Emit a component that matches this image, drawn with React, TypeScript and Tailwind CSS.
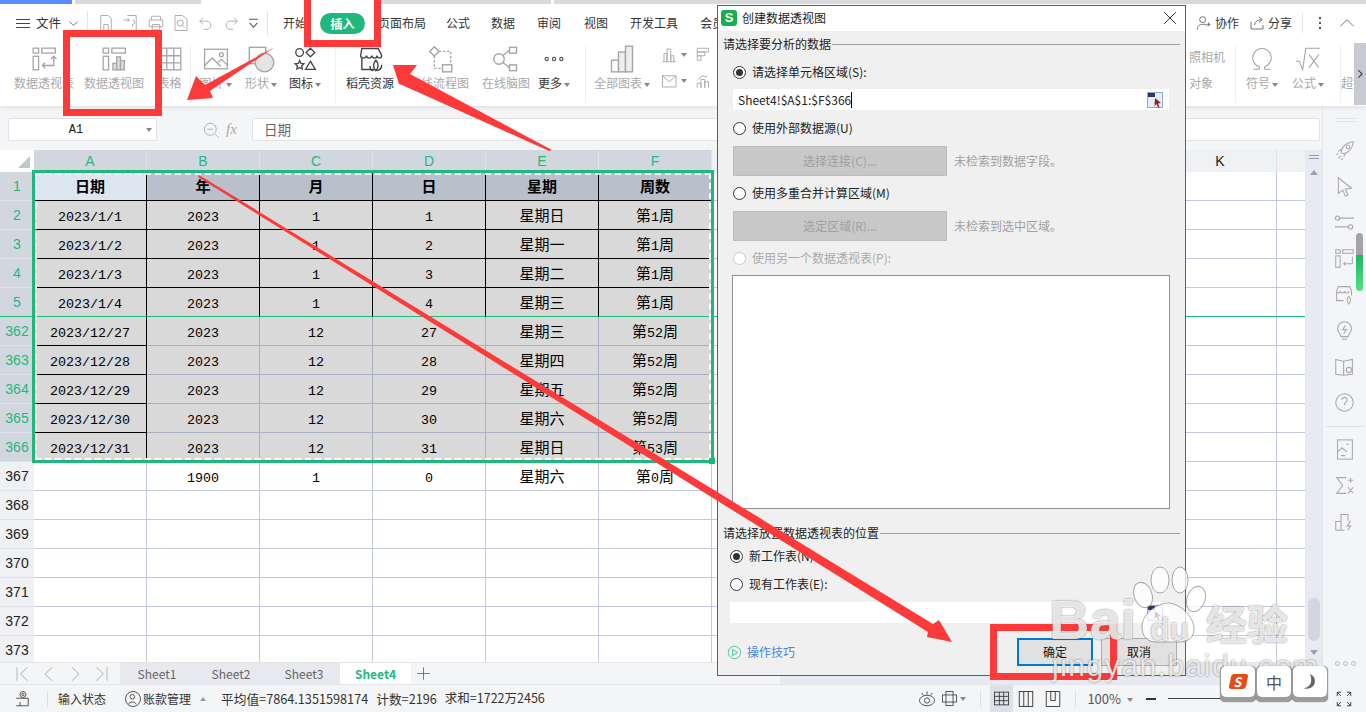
import React from "react";

const G = "#a6a6a6";

function Ic({ s = 24, w, h, c = G, sw = 1.2, children, vb = "0 0 24 24", className = "" }: any) {
  return (
    <svg width={w ?? s} height={h ?? s} viewBox={vb} fill="none" stroke={c} strokeWidth={sw} className={className}>
      {children}
    </svg>
  );
}

const PivotBase = (
  <>
    <rect x="2" y="2" width="5" height="4.5" />
    <rect x="2" y="9.5" width="5" height="12.5" />
    <rect x="10" y="2" width="12.5" height="4.5" />
  </>
);
const PivotT = () => (
  <Ic s={26}>
    {PivotBase}
    <path d="M21 10v8h-10M13 15.5 10.5 18l2.5 2.5M18.5 12 21 9.5l2.5 2.5" />
  </Ic>
);
const PivotC = () => (
  <Ic s={26}>
    {PivotBase}
    <rect x="11" y="16" width="3.5" height="6" fill="#ddd" />
    <rect x="14.5" y="10" width="3.5" height="12" fill="#ddd" />
    <rect x="18" y="13.5" width="3.5" height="8.5" fill="#ddd" />
  </Ic>
);
const TableI = () => (
  <Ic s={26}>
    <rect x="2" y="2" width="20" height="20" />
    <path d="M2 9h20M2 15.5h20M9 2v20M15.5 2v20" />
  </Ic>
);
const PicI = () => (
  <Ic s={26}>
    <rect x="1.5" y="3" width="21" height="18" />
    <path d="m1.5 18 7-7 8 8M14 15l3-2.5 5.500 5" />
    <circle cx="17" cy="8" r="1.800" />
  </Ic>
);
const ShapeI = () => (
  <Ic s={28}>
    <rect x="2" y="2" width="14" height="14" fill="#fff" />
    <circle cx="15" cy="15" r="8" fill="#e4e4e4" />
  </Ic>
);
const IconsI = () => (
  <Ic s={26} c="#444">
    <circle cx="7" cy="6" r="3.500" />
    <path d="m17 2 4 4-4 4-4-4zM7 13.500l1.200 2.600 2.800.3-2 2 .5 2.800-2.500-1.400-2.500 1.400.5-2.800-2-2 2.800-.3zM17 14l4.500 7.500h-9z" />
  </Ic>
);
const StoreI = () => (
  <Ic s={28} c="#444">
    <path d="M5 10v11h11M5 3h14l3 6c0 3-3.500 3-4 0 0 3-4 3-4.500 0-.5 3-4 3-4.500 0-.5 3-5 3-5 0z" />
    <path d="M17 22c-3-3-2-7 0-9 2 2 3 6 0 9zM17 22c3 0 5-2 5-5M15 22c-2 0-3-2-3-4" />
  </Ic>
);
const FlowI = () => (
  <Ic s={28}>
    <path d="m8 1.500 4 4-4 4-4-4z" />
    <path d="M12 5.500h10V17M8 9.500V20h7" strokeDasharray="2 1.500" />
    <rect x="15" y="17" width="8" height="6" />
  </Ic>
);
const MindI = () => (
  <Ic s={28}>
    <circle cx="6" cy="12" r="4.500" />
    <rect x="15" y="2" width="6" height="5" />
    <rect x="15" y="17" width="6" height="5" />
    <path d="M9.500 9 15 4.500M9.500 15l5.500 4.500" />
  </Ic>
);
const MoreI = () => (
  <Ic s={22} c="#555">
    <circle cx="4" cy="12" r="1.800" />
    <circle cx="12" cy="12" r="1.800" />
    <circle cx="20" cy="12" r="1.800" />
  </Ic>
);
const BarsI = () => (
  <Ic s={28}>
    <rect x="3" y="13" width="6" height="10" />
    <rect x="9" y="6" width="6" height="17" fill="#eee" />
    <rect x="15" y="1" width="6" height="22" fill="#eee" />
  </Ic>
);
const Caret = ({ c = "#888" }: any) => (
  <span className="inline-block w-0 h-0 ml-[2px] align-middle border-x-[3px] border-x-transparent border-t-[4px]" style={{ borderTopColor: c }} />
);

function RI({ w, icon, label, on, caret }: any) {
  return (
    <div className={`flex flex-col items-center shrink-0 pt-[3px] ${w}`}>
      <div className="h-[28px] flex items-center justify-center">{icon}</div>
      <div className={`mt-[1px] text-[12px] leading-[18px] whitespace-nowrap ${on ? "text-[#333]" : "text-[#a9a9a9]"}`}>
        {label}
        {caret && <Caret />}
      </div>
    </div>
  );
}
const VSep = ({ mx = "" }: any) => <div className={`w-px h-[58px] bg-[#eeeff2] shrink-0 self-center ${mx}`} />;

function MenuRow() {
  const qi = "shrink-0";
  return (
    <div className="h-[38px] flex items-center bg-white text-[12px] text-[#333] shrink-0">
      <div className="flex flex-col gap-[3px] ml-[16px] w-[14px]">
        <div className="h-px bg-[#444]" />
        <div className="h-px bg-[#444]" />
        <div className="h-px bg-[#444]" />
      </div>
      <span className="ml-[6px] text-[12.500px]">文件</span>
      <Ic s={11} c="#777" className="ml-[7px]"><path d="m3 8 9 8 9-8" strokeWidth="2" /></Ic>
      <div className="w-px h-[24px] bg-[#e3e4e8] ml-[8px] mr-[9px]" />
      <div className="flex items-center gap-[7px] w-[168px]">
        <Ic s={18} className={qi}><path d="M5 2h10l4 4v16H5zM9 22v-8h6v8" /></Ic>
        <Ic s={18} className={qi}><path d="M7 2h12v20H7M2 8h8M7 5l3 3-3 3M14 8a3 3 0 0 1 0 6v3" /></Ic>
        <Ic s={18} className={qi}><path d="M6 8V3h12v5M3 8h18v9H3zM7 14h10v7H7z" /></Ic>
        <Ic s={18} className={qi}><path d="M4 2h10l6 5v15H4z" /><circle cx="11" cy="12" r="4" /><path d="m14 15 3 3" /></Ic>
        <Ic s={18} className={qi}><path d="M8 5 3.500 9.500 8 14M4 9.500h9a5.500 5.500 0 0 1 0 11H9" /></Ic>
        <Ic s={18} className={qi}><path d="M16 5l4.500 4.500L16 14M20 9.500h-9a5.500 5.500 0 0 0 0 11h4" /></Ic>
        <Ic s={13} c="#555" className={qi}><path d="M4 4h16M5 11l7 8 7-8" strokeWidth="2" /></Ic>
      </div>
      <div className="w-px h-[24px] bg-[#e3e4e8] ml-[2px]" />
      <div className="flex items-center ml-[15px] whitespace-nowrap">
        <span>开始</span>
        <span className="ml-[13px] w-[45px] h-[21px] rounded-full bg-[#1fb97d] text-white font-bold text-center leading-[21px]">插入</span>
        <span className="ml-[13px]">页面布局</span>
        <span className="ml-[20px]">公式</span>
        <span className="ml-[21px]">数据</span>
        <span className="ml-[22px]">审阅</span>
        <span className="ml-[23px]">视图</span>
        <span className="ml-[22px]">开发工具</span>
        <span className="ml-[22px]">会员专享</span>
      </div>
      <div className="ml-auto flex items-center">
        <Ic s={16} c="#555"><circle cx="10" cy="7" r="4.500" /><path d="M2 22c0-6 4-8 8-8s6 1 7 2M19 11v6M16 14h6" /></Ic>
        <span className="ml-[3px]">协作</span>
        <Ic s={16} c="#555" className="ml-[10px]"><path d="M3 10v11h18v-6M8 15c1-5 5-8 11-8M15 3l5 4-5 4" /></Ic>
        <span className="ml-[3px]">分享</span>
        <div className="w-px h-[20px] bg-[#e3e4e8] ml-[10px]" />
        <div className="flex flex-col gap-[3px] ml-[16px]">
          <div className="w-[2px] h-[2px] bg-[#555]" />
          <div className="w-[2px] h-[2px] bg-[#555]" />
          <div className="w-[2px] h-[2px] bg-[#555]" />
        </div>
        <Ic s={16} c="#555" className="ml-[18px] mr-[11px]"><path d="m2 17 10-10 10 10" /></Ic>
      </div>
    </div>
  );
}

function Ribbon() {
  return (
    <div className="h-[64px] flex bg-white shadow-[0_2px_4px_rgba(0,0,0,0.08)] relative z-10 shrink-0">
      <div className="w-[9px] shrink-0" />
      <RI w="w-[70px]" icon={<PivotT />} label="数据透视表" />
      <RI w="w-[70px]" icon={<PivotC />} label="数据透视图" />
      <RI w="w-[41px]" icon={<TableI />} label="表格" />
      <VSep />
      <RI w="w-[49px]" icon={<PicI />} label="图片" caret />
      <RI w="w-[42px]" icon={<ShapeI />} label="形状" caret />
      <RI w="w-[46px]" icon={<IconsI />} label="图标" caret on />
      <div className="w-[7px]" />
      <VSep />
      <RI w="w-[68px]" icon={<StoreI />} label="稻壳资源" on />
      <RI w="w-[70px]" icon={<FlowI />} label="在线流程图" />
      <RI w="w-[64px]" icon={<MindI />} label="在线脑图" />
      <RI w="w-[32px]" icon={<MoreI />} label="更多" caret on />
      <div className="w-[15px]" />
      <VSep />
      <RI w="w-[72px]" icon={<BarsI />} label="全部图表" caret />
      <div className="flex flex-col gap-[8px] pt-[4px] ml-[3px] w-[34px] shrink-0">
        <div className="flex items-center">
          <Ic s={18}><path d="M4 21V10h4v11M8 21V4h5v17M13 21v-8h4v8M2 21h18" /></Ic>
          <Caret />
        </div>
        <div className="flex items-center">
          <Ic s={18}><path d="M2 5h18v15H2zM2 5l9 8 9-8" /></Ic>
          <Caret />
        </div>
      </div>
      <div className="flex flex-col gap-[8px] pt-[4px] w-[21px] shrink-0">
        <Ic s={18}><path d="M3 3h15v5H3zM3 8h10v5H3zM3 13h5v6H3z" /></Ic>
        <Ic s={18}><path d="M3 21v-6h5v6M8 21V10h5v11M13 21v-8h5v8M4 10l6-5 6 2" /></Ic>
      </div>
      <div className="flex-1" />
      <div className="flex flex-col w-[46px] shrink-0 text-[12px] text-[#a9a9a9] pt-[6px]">
        <span className="leading-[18px]">照相机</span>
        <span className="leading-[18px] mt-[8px]">对象</span>
      </div>
      <VSep />
      <RI w="w-[52px]" icon={<Ic s={26} sw={1}><path d="M4 21.500h5.500v-2.500a8.500 8.500 0 1 1 5 0v2.500H20" /></Ic>} label="符号" caret />
      <RI w="w-[40px]" icon={<Ic s={26} sw={1}><path d="M1 14h3l3 8 3-20h13M13 8l9 12M22 8l-9 12" /></Ic>} label="公式" caret />
      <div className="w-[12px]" />
      <VSep />
      <div className="w-[13px] pt-[32px] text-[12px] leading-[18px] text-[#a9a9a9] overflow-hidden whitespace-nowrap">超链接</div>
      <div className="w-[12px] bg-[#c9cacf] flex items-center justify-center text-[#333] my-[1px]">
        <Ic s={10} c="#222" sw={2.500}><path d="m8 3 9 9-9 9" /></Ic>
      </div>
    </div>
  );
}

function FormulaRow() {
  return (
    <div className="h-[44px] bg-[#f4f5f7] flex items-center pt-[3px] pl-[8px] pr-[2px] shrink-0">
      <div className="w-[149px] h-[23px] bg-white border border-[#e2e3e7] rounded-[2px] flex items-center relative justify-center pr-[13px] font-['Liberation_Mono',monospace] text-[12px] text-[#222]">
        A1
        <span className="absolute right-[4px] top-[9px] w-0 h-0 border-x-[3px] border-x-transparent border-t-[4px] border-t-[#888]" />
      </div>
      <Ic s={18} className="ml-[45px]" c="#aaa"><circle cx="11" cy="11" r="8" /><path d="M7 11h8M17 17l5 5" /></Ic>
      <span className="ml-[6px] w-[20px] italic text-[15px] text-[#aaa] font-['Liberation_Serif',serif]">fx</span>
      <div className="ml-[6px] flex-1 h-[23px] bg-white border border-[#e2e3e7] rounded-[2px] px-[11px] text-[13.500px] leading-[20px] text-[#666]">日期</div>
    </div>
  );
}

const Mono = "font-['Liberation_Mono',monospace] text-[13.330px]";
function Mix({ t }: { t: string }) {
  return (
    <>
      {t.split(/([\d/]+)/).map((p, i) =>
        /[\d/]/.test(p) ? <span key={i} className={Mono}>{p}</span> : <span key={i}>{p}</span>
      )}
    </>
  );
}

const COLS = ["A", "B", "C", "D", "E", "F", "G", "H", "I", "J", "K", "L"];

function Row({ num, cells, kind }: { num: string; cells?: string[]; kind: string }) {
  const selected = kind !== "plain";
  return (
    <div className="flex h-[29px] shrink-0">
      <div
        className={`w-[34px] shrink-0 text-center text-[14px] leading-[28px] font-['Liberation_Sans',sans-serif] ${
          selected ? "bg-[#d2d6df] text-[#1fb97d]" : "bg-[#eff1f5] text-[#222]"
        } ${kind === "r5" ? "border-b border-b-[#1fb97d]" : "border-b border-b-[#dfe2e9]"}`}
      >
        {num}
      </div>
      {COLS.map((c, i) => {
        const inSel = selected && i < 6;
        let cls = "border-r border-b border-[#c3c9d8]";
        if (kind === "head" || kind === "top") cls = "border-r border-b border-black";
        if (kind === "r5") cls = "border-r border-black border-b-[#1fb97d] border-b";
        if (kind === "low") cls = i === 0 ? "border-r border-b border-black" : "border-r border-b border-[#a9afc0]";
        if (selected && i >= 6) cls = kind === "r5" ? "border-r border-[#c3c9d8] border-b border-b-[#1fb97d]" : "border-r border-b border-[#c3c9d8]";
        let bg = "bg-white";
        if (inSel) bg = "bg-[#d9d9d9]";
        if (kind === "head" && i < 6) bg = i === 0 ? "bg-[#dce6f1]" : "bg-[#b8c0cb]";
        return (
          <div
            key={c}
            className={`w-[113px] shrink-0 text-center leading-[28px] text-[15px] text-black ${cls} ${bg} ${
              kind === "head" && i < 6 ? "font-bold text-[#333]" : ""
            }`}
          >
            {cells && cells[i] ? <Mix t={cells[i]} /> : null}
          </div>
        );
      })}
    </div>
  );
}

function Sheet() {
  const rows: [string, string[] | undefined, string][] = [
    ["1", ["日期", "年", "月", "日", "星期", "周数"], "head"],
    ["2", ["2023/1/1", "2023", "1", "1", "星期日", "第1周"], "top"],
    ["3", ["2023/1/2", "2023", "1", "2", "星期一", "第1周"], "top"],
    ["4", ["2023/1/3", "2023", "1", "3", "星期二", "第1周"], "top"],
    ["5", ["2023/1/4", "2023", "1", "4", "星期三", "第1周"], "r5"],
    ["362", ["2023/12/27", "2023", "12", "27", "星期三", "第52周"], "low"],
    ["363", ["2023/12/28", "2023", "12", "28", "星期四", "第52周"], "low"],
    ["364", ["2023/12/29", "2023", "12", "29", "星期五", "第52周"], "low"],
    ["365", ["2023/12/30", "2023", "12", "30", "星期六", "第52周"], "low"],
    ["366", ["2023/12/31", "2023", "12", "31", "星期日", "第53周"], "low"],
    ["367", ["", "1900", "1", "0", "星期六", "第0周"], "plain"],
    ["368", undefined, "plain"],
    ["369", undefined, "plain"],
    ["370", undefined, "plain"],
    ["371", undefined, "plain"],
    ["372", undefined, "plain"],
    ["373", undefined, "plain"],
  ];
  return (
    <div className="h-[512px] w-[1305px] overflow-hidden relative shrink-0 bg-white">
      <div className="flex h-[22px]">
        <div className="w-[34px] shrink-0 bg-white relative">
          <div className="absolute right-[4px] bottom-[4px] w-0 h-0 border-l-[12px] border-l-transparent border-b-[12px] border-b-[#c4c6cc]" />
        </div>
        {COLS.map((c, i) => (
          <div
            key={c}
            className={`w-[113px] shrink-0 text-center text-[14px] leading-[22px] font-['Liberation_Sans',sans-serif] border-r border-[#dfe2e9] ${
              i < 6 ? "bg-[#d2d6df] text-[#1fb97d]" : "bg-[#eff1f5] text-[#222]"
            }`}
          >
            {c}
          </div>
        ))}
      </div>
      {rows.map((r) => (
        <Row key={r[0]} num={r[0]} cells={r[1]} kind={r[2]} />
      ))}
      <div className="absolute left-[32px] top-[20px] w-[682px] h-[293px] border-[3px] border-[#1fb97d] pointer-events-none">
        <div className="w-full h-full border-2 border-dashed border-white" />
        <div className="absolute right-[-4px] bottom-[-4px] w-[6px] h-[6px] bg-[#1fb97d]" />
      </div>
    </div>
  );
}

function VScroll() {
  return (
    <div className="w-[17px] h-[512px] bg-[#e8eaf1] flex flex-col items-center relative shrink-0">
      <div className="mt-[5px] w-[10px] h-[4px] border-y border-[#9a9ea8]" />
      <div className="mt-[11px] w-0 h-0 border-x-[4px] border-x-transparent border-b-[5px] border-b-[#9aa0ad]" />
      <div className="mt-[423px] w-[12px] h-[43px] rounded-[6px] bg-[#d3d6e0]" />
      <div className="mt-[9px] w-0 h-0 border-x-[4px] border-x-transparent border-t-[5px] border-t-[#9aa0ad]" />
    </div>
  );
}

function TabsRow() {
  return (
    <div className="h-[23px] bg-[#f4f5f7] flex items-center border-y border-[#e3e5ea] shrink-0 text-[12px] text-[#666]">
      <div className="w-[120px] flex items-center shrink-0 pl-[14px] gap-[8px]">
        <Ic s={18} c="#bbb" sw={1.400}><path d="M4 3v18M18 3l-9 9 9 9" /></Ic>
        <Ic s={18} c="#bbb" sw={1.400}><path d="m16 3-9 9 9 9" /></Ic>
        <Ic s={18} c="#bbb" sw={1.400}><path d="m8 3 9 9-9 9" /></Ic>
        <Ic s={18} c="#bbb" sw={1.400}><path d="M20 3v18M6 3l9 9-9 9" /></Ic>
      </div>
      <div className="w-[220px] h-full bg-[#e7e9ef] flex items-center shrink-0">
        <span className="w-[74px] text-center">Sheet1</span>
        <span className="w-[74px] text-center">Sheet2</span>
        <span className="w-[72px] text-center">Sheet3</span>
      </div>
      <div className="w-[71px] h-full bg-white text-[#1fb97d] font-bold text-center leading-[21px] shrink-0">Sheet4</div>
      <Ic s={15} c="#555" className="ml-[5px]"><path d="M12 2v20M2 12h20" /></Ic>
      <div className="ml-auto w-[542px] h-full bg-[#e8eaf1]" />
    </div>
  );
}

function Sidebar() {
  const on = (d: React.ReactNode) => <Ic s={21} c="#a8a8a8">{d}</Ic>;
  const list = [
    <><path d="M9 15c-2-4 3-12 13-13-1 10-9 15-13 13zM5 13l5-3M11 19l3-5M5 21l3-3M3 17l2-2M8 23l2-2" /><circle cx="16" cy="8" r="2" /></>,
    <path d="M5 2l15 12-7 1 3 7-3 1-3-7-5 4z" />,
    <><circle cx="4" cy="7" r="2.500" /><path d="M7 7h16M1 17h16" /><circle cx="19" cy="17" r="2.500" /></>,
    <><rect x="2" y="2" width="5" height="4" /><rect x="2" y="9" width="5" height="13" /><rect x="10" y="2" width="12" height="4" /><path d="M21 10v8H11M13 16l-2 2 2 2" /></>,
    <path d="M3 8l2-5h13l2 5v5M3 8v11h8M3 8c0 3 4 3 4 0 0 3 5 3 5 0 0 3 5 3 5 0M17 23c-3-3-2-7 0-9 2 2 3 6 0 9z" />,
    <><path d="M8 19c0-3-4-4-4-9a8 8 0 0 1 16 0c0 5-4 6-4 9zM9 22h6" /><path d="m13 6-3 5h4l-3 5" /></>,
    <><path d="M2 4l9 2 10-2v17l-10 1-9-1zM11 6v16" /><circle cx="17" cy="16" r="3" /></>,
    <><circle cx="12" cy="12" r="10" /><path d="M9 9a3 3 0 1 1 4 3c-1 .5-1 1-1 3M12 18v.5" /></>,
  ];
  const list2 = [
    <><rect x="4" y="1" width="17" height="22" /><path d="M4 15l5-5 6 5M14 6h3M8 19h5" /></>,
    <path d="M14 3H3l7 9-7 9h11M19 3v6M16 6h6M16 14l6 7M22 14l-6 7" />,
    <path d="M2 22V12h6V4h8v7M2 22h10M8 12v10M19 11l-4 6h4l-3 5" />,
  ];
  return (
    <div className="w-[44px] bg-[#f4f5f8] border-l border-[#e5e7ec] flex flex-col items-center shrink-0 relative">
      <div className="mt-[12px] w-[20px] h-[4px] border-y border-[#dfe1e6]" />
      <div className="mt-[18px] flex flex-col gap-[15px] items-center">
        {list.map((d, i) => (
          <div key={i} className="h-[21px]">{on(d)}</div>
        ))}
      </div>
      <div className="mt-[13px] w-[38px] h-px bg-[#dfe1e6]" />
      <div className="mt-[12px] flex flex-col gap-[15px] items-center">
        {list2.map((d, i) => (
          <div key={i} className="h-[21px]">{on(d)}</div>
        ))}
      </div>
      <div className="absolute left-[33px] top-[127px] w-[7px] h-[58px] rounded-[4px] overflow-hidden flex flex-col">
        <div className="h-[22px] bg-[#a5a5a5]" />
        <div className="flex-1 bg-gradient-to-b from-[#18b569] to-[#52e080]" />
      </div>
      <div className="absolute left-[12px] top-[555px] flex gap-[3px]">
        <div className="w-[5px] h-[5px] rounded-full border border-[#bbb]" />
        <div className="w-[5px] h-[5px] rounded-full border border-[#bbb]" />
        <div className="w-[5px] h-[5px] rounded-full border border-[#bbb]" />
      </div>
    </div>
  );
}

function StatusBar() {
  return (
    <div className="h-[27px] bg-[#f4f5f7] flex items-center text-[12px] text-[#333] whitespace-nowrap shrink-0">
      <Ic s={18} c="#444" className="ml-[14px]"><circle cx="12" cy="6" r="4" /><circle cx="12" cy="6" r="1.500" /><path d="M3 11h16v10H8M8 16v5M3 21h5" /></Ic>
      <div className="w-px h-[16px] bg-[#dcdde1] ml-[15px]" />
      <span className="ml-[10px]">输入状态</span>
      <Ic s={18} c="#444" className="ml-[18px]"><circle cx="12" cy="12" r="10" /><circle cx="11" cy="9" r="3" /><path d="M6 19c1-4 9-4 10 0" /></Ic>
      <span className="ml-[1px]">账款管理</span>
      <span className="ml-[9px] w-0 h-0 border-x-[3.500px] border-x-transparent border-b-[4px] border-b-[#999]" />
      <span className="ml-[15px] text-[12.700px]">平均值=7864.1351598174</span>
      <span className="ml-[8px] text-[12.700px]">计数=2196</span>
      <span className="ml-[8px] text-[12.500px]">求和=1722万2456</span>
      <div className="ml-auto flex items-center">
        <Ic s={18} c="#444"><ellipse cx="12" cy="14" rx="10" ry="7" /><circle cx="12" cy="14" r="3.500" /><path d="M12 2v4M5 4l2 3M19 4l-2 3" /></Ic>
        <Ic s={17} c="#444" className="ml-[5px]"><rect x="2" y="7" width="20" height="10" /><rect x="7" y="2" width="10" height="20" /></Ic>
        <Caret />
        <div className="w-px h-[16px] bg-[#dcdde1] ml-[14px]" />
        <div className="ml-[9px] w-[23px] h-[27px] bg-[#dde0e7] flex items-center justify-center">
          <Ic s={17} c="#333"><rect x="2" y="3" width="20" height="18" /><path d="M2 9h20M2 15h20M9 3v18M15 3v18" /></Ic>
        </div>
        <Ic s={18} c="#333" className="ml-[4px]"><rect x="3" y="2" width="18" height="20" /><path d="M9 2v20M15 2v20" /></Ic>
        <Ic s={18} c="#333" className="ml-[9px]"><path d="M3 2h18v20H3zM9 2v12h6V2" /></Ic>
        <div className="w-px h-[16px] bg-[#dcdde1] ml-[13px]" />
        <span className="ml-[11px] text-[13px] text-[#555]">100%</span>
        <span className="ml-[4px]"><Caret /></span>
        <div className="ml-[13px] w-[10px] h-[2px] bg-[#333]" />
        <div className="ml-[12px] w-[125px] h-px bg-[#444]" />
        <Ic s={18} c="#333" className="ml-[42px] mr-[13px]"><path d="M3 8V3h5M16 3h5v5M21 16v5h-5M8 21H3v-5M3 3l5 5M21 3l-5 5M21 21l-5-5M3 21l5-5" /></Ic>
      </div>
    </div>
  );
}

function Radio({ on, off }: any) {
  return (
    <span className={`w-[13px] h-[13px] rounded-full border shrink-0 flex items-center justify-center bg-white ${off ? "border-[#ccc]" : "border-[#333]"}`}>
      {on && <span className="w-[7px] h-[7px] rounded-full bg-[#333]" />}
    </span>
  );
}
const Picker = () => (
  <Ic s={16} vb="0 0 16 16" c="#8aa8d8" sw={1}>
    <rect x="0.500" y="0.500" width="15" height="15" fill="#e6eefb" />
    <rect x="1" y="1" width="7" height="4" fill="#33336b" stroke="none" />
    <path d="m8 6 6 5-3 .5 1.500 3.500-1.500.5-1.500-3.500-2 2z" fill="#8a2a1a" stroke="none" />
  </Ic>
);
function Legend({ t }: any) {
  return (
    <div className="flex items-center h-[18px] text-[12px] text-[#222] whitespace-nowrap">
      {t}
      <div className="flex-1 h-px bg-[#a0a0a0] ml-[1px]" />
    </div>
  );
}
function RadioLine({ on, off, label, cls }: any) {
  return (
    <div className={`flex items-center gap-[6px] h-[18px] text-[12px] whitespace-nowrap ${off ? "text-[#aaa]" : "text-[#222]"} ${cls}`}>
      <Radio on={on} off={off} />
      {label}
    </div>
  );
}
function DisabledBtn({ t, hint, cls }: any) {
  return (
    <div className={`flex items-center ml-[10px] ${cls}`}>
      <div className="w-[214px] h-[30px] bg-[#c8c8c8] border border-[#bdbdbd] text-center leading-[28px] text-[12px] text-[#a0a0a0]">{t}</div>
      <span className="ml-[7px] text-[12px] text-[#a0a0a0]">{hint}</span>
    </div>
  );
}

function Dialog() {
  return (
    <div className="absolute left-[717px] top-[5px] w-[469px] h-[671px] bg-[#f0f0f0] border border-[#5f5f5f] z-20 flex flex-col">
      <div className="h-[25px] pb-[2px] bg-white flex items-center shrink-0">
        <span className="ml-[3px] w-[16px] h-[16px] rounded-[3px] bg-[#15b04d] text-white text-[13px] font-bold leading-[16px] text-center font-['Liberation_Sans',sans-serif]">S</span>
        <span className="ml-[5px] text-[12px] text-[#222]">创建数据透视图</span>
        <Ic s={14} c="#222" className="ml-auto mr-[8px]"><path d="m2 2 20 20M22 2 2 22" strokeWidth="1.600" /></Ic>
      </div>
      <div className="pl-[5px] pr-[5px] flex flex-col flex-1 relative">
        <div className="mt-[4px]"><Legend t="请选择要分析的数据" /></div>
        <RadioLine on label="请选择单元格区域(S):" cls="ml-[10px] mt-[10px]" />
        <div className="ml-[10px] mt-[8px] w-[436px] h-[21px] bg-white flex items-center pl-[5px] pr-[6px] text-[12px] text-[#222]">
          Sheet4!$A$1:$F$366
          <span className="w-px h-[16px] bg-black" />
          <span className="ml-auto"><Picker /></span>
        </div>
        <RadioLine label="使用外部数据源(U)" cls="ml-[10px] mt-[9px]" />
        <DisabledBtn t="选择连接(C)..." hint="未检索到数据字段。" cls="mt-[9px]" />
        <RadioLine label="使用多重合并计算区域(M)" cls="ml-[10px] mt-[8px]" />
        <DisabledBtn t="选定区域(R)..." hint="未检索到选中区域。" cls="mt-[9px]" />
        <RadioLine off label="使用另一个数据透视表(P):" cls="ml-[10px] mt-[8px]" />
        <div className="ml-[9px] mt-[8px] w-[438px] h-[234px] bg-white border border-[#8f8f8f] shrink-0" />
        <div className="mt-[15px]"><Legend t="请选择放置数据透视表的位置" /></div>
        <RadioLine on label="新工作表(N)" cls="ml-[7px] mt-[5px]" />
        <RadioLine label="现有工作表(E):" cls="ml-[7px] mt-[10px]" />
        <div className="ml-[7px] mt-[9px] w-[439px] h-[21px] bg-white flex items-center justify-end pr-[6px] shrink-0"><Picker /></div>
        <div className="flex items-center mt-[15px]">
          <span className="ml-[4px]"><Ic s={15} c="#1fb97d"><circle cx="12" cy="12" r="10" /><path d="m9 7 8 5-8 5z" /></Ic></span>
          <span className="ml-[5px] text-[12px] text-[#4a86e8]">操作技巧</span>
          <div className="ml-[222px] w-[76px] h-[28px] border-2 border-[#0078d7] bg-[#e1e1e1] text-center leading-[24px] text-[12px] text-[#111]">确定</div>
          <div className="ml-[8px] w-[76px] h-[28px] border border-[#adadad] bg-[#e1e1e1] text-center leading-[26px] text-[12px] text-[#111]">取消</div>
        </div>
      </div>
    </div>
  );
}

function Annotations() {
  const red = "#fd3a3a";
  return (
    <>
      <div className="absolute left-[63px] top-[30px] w-[99px] h-[86px] border-[7px] border-[#fd3a3a] z-30" />
      <div className="absolute left-[304px] top-[-8px] w-[77px] h-[55px] border-[7px] border-[#fd3a3a] z-30" />
      <div className="absolute left-[990px] top-[624px] w-[127px] h-[56px] border-[7px] border-[#fd3a3a] z-30" />
      <svg className="absolute left-0 top-0 z-30 pointer-events-none" width={1366} height={712} fill={red}>
        <polygon points="187,100 196,76 205,85 275,47 210,91 213,98" />
        <polygon points="393,65 417,65 410,74 552,150 549,151 402,85 399,84" />
        <polygon points="199,175 933,624 939,620 952,642 927,637 928,632 198,177" />
      </svg>
    </>
  );
}

function Watermark() {
  const sh = "[text-shadow:0_0_2px_rgba(60,60,60,0.7)]";
  return (
    <div className="absolute left-0 top-0 w-[1366px] h-[712px] z-40 pointer-events-none">
      <span className={`absolute left-[1049px] top-[590px] text-[56px] leading-[60px] font-bold text-white/80 font-['Liberation_Sans',sans-serif] ${sh}`}>Bai</span>
      <svg className="absolute left-[1130px] top-[565px]" width={76} height={80} fill="rgba(255,255,255,0.75)" stroke="rgba(90,90,90,0.5)">
        <ellipse cx="13" cy="30" rx="9" ry="13" transform="rotate(-20 13 30)" />
        <ellipse cx="30" cy="15" rx="9" ry="13" />
        <ellipse cx="50" cy="15" rx="8" ry="13" />
        <ellipse cx="66" cy="34" rx="9" ry="13" transform="rotate(20 66 34)" />
        <path d="M12 62c0-14 16-24 26-24s26 12 26 26c0 10-8 13-14 13H26C18 77 12 72 12 62z" />
      </svg>
      <span className={`absolute left-[1150px] top-[612px] text-[32px] leading-[34px] font-bold text-white/80 font-['Liberation_Sans',sans-serif] ${sh}`}>du</span>
      <span className={`absolute left-[1206px] top-[598px] text-[41px] leading-[48px] font-bold text-white/80 ${sh}`}>经验</span>
      <span className={`absolute left-[1052px] top-[650px] text-[30px] leading-[32px] tracking-[1.500px] text-white/80 font-['Liberation_Sans',sans-serif] ${sh}`}>jingyan.baidu.com</span>
    </div>
  );
}

function Key({ children }: any) {
  return (
    <div className="w-[36px] h-[36px] rounded-[5px] bg-[#9c9c9c] pb-[5px] px-[1px] shadow-[0_0_1px_#555]">
      <div className="w-full h-full rounded-[5px] bg-white flex items-center justify-center">{children}</div>
    </div>
  );
}
function Ime() {
  return (
    <div className="absolute left-[1220px] top-[666px] z-50 flex">
      <Key>
        <span className="w-[17px] h-[15px] -skew-x-12 rounded-[3px] bg-[#e94a1a] text-white text-[13px] font-bold leading-[15px] text-center">S</span>
      </Key>
      <Key><span className="text-[16px] text-[#555]">中</span></Key>
      <Key>
        <svg width={16} height={18} viewBox="0 0 16 18" fill="#666"><path d="M8 1c5 2 6 7 4 11-2 3-7 5-11 3 4 0 7-2 8-6 .5-3 0-6-1-8z" /></svg>
      </Key>
    </div>
  );
}

export default function App() {
  return (
    <div className="w-[1366px] h-[712px] relative overflow-hidden bg-white font-['Noto_Sans_CJK_SC',sans-serif] flex flex-col">
      <div className="h-[4px] flex bg-white shrink-0">
        <div className="w-[72px] bg-[#5b8cff]" />
        <div className="w-[3px]" />
        <div className="w-[126px] bg-[#d8d9dd]" />
        <div className="w-[180px]" />
        <div className="w-[170px] bg-[#d8d9dd]" />
        <div className="w-[3px]" />
        <div className="flex-1 bg-[#d8d9dd]" />
      </div>
      <MenuRow />
      <Ribbon />
      <div className="flex flex-1 min-h-0">
        <div className="w-[1322px] flex flex-col shrink-0">
          <FormulaRow />
          <div className="flex">
            <Sheet />
            <VScroll />
          </div>
          <TabsRow />
        </div>
        <Sidebar />
      </div>
      <StatusBar />
      <Dialog />
      <Annotations />
      <Watermark />
      <Ime />
    </div>
  );
}
